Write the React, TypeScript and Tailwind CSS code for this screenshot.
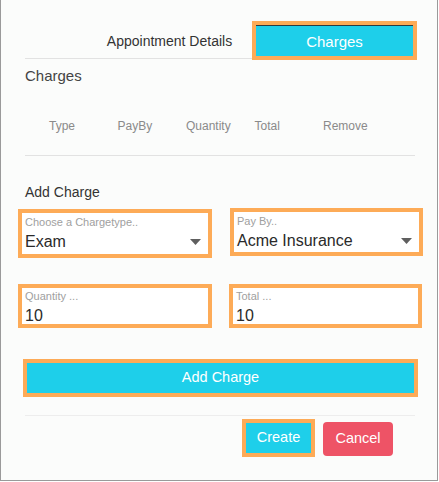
import React from 'react';

const orange = 'border-4 border-[#fdab57]';

const Caret = () => (
  <svg width="11" height="6" viewBox="0 0 11 6" className="shrink-0">
    <path d="M0 0 L11 0 L5.5 6 Z" fill="#5f5f5f" />
  </svg>
);

const SelectBox = ({ label, value, className }: { label: string; value: string; className: string }) => (
  <div className={`${orange} bg-white pl-[3px] pr-[7px] shrink-0 ${className}`}>
    <div className="text-[11px] leading-[13px] text-[#a0a0a0] pt-[3px]">{label}</div>
    <div className="flex items-center justify-between mt-[3px]">
      <span className="text-[16px] leading-[20px] text-[#2a2a2a]">{value}</span>
      <Caret />
    </div>
  </div>
);

const InputBox = ({ label, value, className }: { label: string; value: string; className: string }) => (
  <div className={`${orange} bg-white pl-[3px] shrink-0 ${className}`}>
    <div className="text-[11px] leading-[13px] text-[#a0a0a0] pt-[2px]">{label}</div>
    <div className="text-[16px] leading-[20px] text-[#2a2a2a] mt-[3px]">{value}</div>
  </div>
);

const App = () => {
  const columns = ['Type', 'PayBy', 'Quantity', 'Total', 'Remove'];
  return (
    <div className="w-[438px] h-[481px] bg-[#fbfcfb] border-x border-b border-[#9a9a9a] font-['Liberation_Sans',Arial,sans-serif]">
      <div className="pl-[24px] pr-[22px] pt-[21px]">
        {/* Tabs */}
        <div className="flex justify-end h-[38px] border-b border-[#e2e2e2]">
          <div className="w-[165px] flex items-center justify-center pt-[3px] text-[14px] text-[#333]">
            Appointment Details
          </div>
          <div className={`w-[165px] h-[39px] shrink-0 -mr-[2px] ${orange}`}>
            <div className="h-full bg-[#1ecfea] border-t border-[#2d3b40] flex items-center justify-center text-white text-[15px] pt-[2px]">
              Charges
            </div>
          </div>
        </div>

        <div className="mt-[8px] text-[15px] leading-[18px] text-[#444]">Charges</div>

        <div className="mt-[33px] flex pl-[24px] text-[12px] leading-[16px] text-[#8a8a8a]">
          {columns.map(c => (
            <div key={c} className="w-[68.5px] shrink-0">{c}</div>
          ))}
        </div>
        <div className="mt-[21px] h-px bg-[#e2e2e2]" />

        <div className="mt-[28px] text-[14px] leading-[17px] text-[#333]">Add Charge</div>

        <div className="mt-[8px] -ml-[7px] flex gap-[18px] items-start">
          <SelectBox label="Choose a Chargetype.." value="Exam" className="w-[194px] h-[49px]" />
          <SelectBox label="Pay By.." value="Acme Insurance" className="w-[193px] h-[48px] -mt-px" />
        </div>

        <div className="mt-[26px] -ml-[7px] flex gap-[17px]">
          <InputBox label="Quantity ..." value="10" className="w-[194px] h-[44px]" />
          <InputBox label="Total ..." value="10" className="w-[193px] h-[44px]" />
        </div>

        <div className={`mt-[31px] -ml-[2px] w-[395px] h-[38px] ${orange}`}>
          <div className="h-full bg-[#1ecfea] flex items-center justify-center text-white text-[14.5px]">
            Add Charge
          </div>
        </div>

        <div className="mt-[18px] h-px bg-[#ededed]" />

        <div className="mt-[3px] flex justify-end items-start gap-[8px] pr-[22px]">
          <div className={`w-[73px] h-[38px] ${orange}`}>
            <div className="h-full bg-[#1ecfea] flex items-center justify-center text-white text-[14.5px]">
              Create
            </div>
          </div>
          <div className="mt-[3px] w-[70px] h-[34px] rounded-[4px] bg-[#ee5366] flex items-center justify-center text-white text-[14.5px]">
            Cancel
          </div>
        </div>
      </div>
    </div>
  );
};

export default App;
